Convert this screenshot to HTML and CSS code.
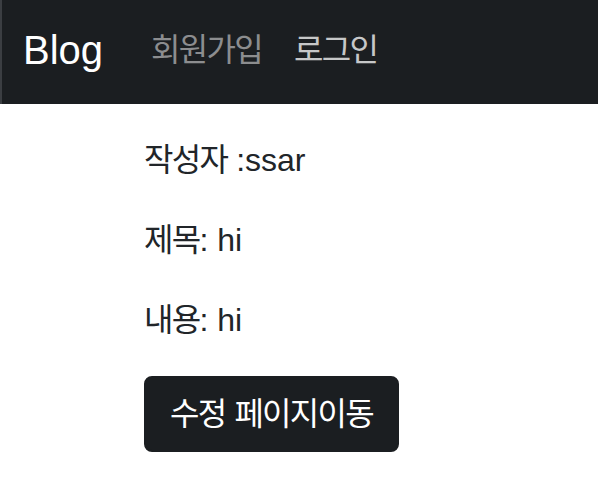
FILE: index.html
```html
<!DOCTYPE html>
<html lang="ko">
<head>
<meta charset="utf-8">
<title>Blog</title>
<link rel="stylesheet" href="styles.css">
</head>
<body>
<nav class="navbar">
  <a class="brand" href="#">Blog</a>
  <ul class="nav">
    <li><a class="nav-link" href="#"><span class="ko">회원가입</span></a></li>
    <li><a class="nav-link active" href="#"><span class="ko">로그인</span></a></li>
  </ul>
</nav>
<main class="content">
  <p><span class="ko">작성자</span> :ssar</p>
  <p><span class="ko">제목</span>: hi</p>
  <p><span class="ko">내용</span>: hi</p>
  <button class="btn" type="button"><span class="ko">수정</span> <span class="ko">페이지이동</span></button>
</main>
</body>
</html>
```
FILE: styles.css
```css
html, body {
  margin: 0;
  padding: 0;
  background: #ffffff;
}
body {
  font-family: "Liberation Sans", "Noto Sans CJK KR", sans-serif;
  font-size: 32px;
  line-height: 1.5;
  color: #212529;
}
.ko {
  letter-spacing: -1.7px;
}
.navbar {
  height: 104px;
  box-sizing: border-box;
  background: #1b1e21;
  border-left: 2px solid #3b3e42;
  display: flex;
  align-items: center;
  padding: 0 20px 0 21px;
}
.brand {
  font-size: 40px;
  line-height: 60px;
  color: #ffffff;
  text-decoration: none;
  margin-right: 32px;
  margin-top: -4px;
}
.nav {
  list-style: none;
  margin: 0;
  padding: 0;
  display: flex;
}
.nav-link {
  display: block;
  padding: 8px 16px;
  line-height: 48px;
  color: #8c8d8f;
  text-decoration: none;
  margin-top: -4px;
}
.nav-link.active {
  color: #c6c7c8;
}
.content {
  padding: 32px 0 0 144px;
}
.content p {
  margin: 0 0 32px;
}
.btn {
  font-family: inherit;
  font-size: 32px;
  line-height: 48px;
  color: #ffffff;
  background: #1b1e21;
  border: 2px solid #1b1e21;
  border-radius: 8px;
  padding: 12px 24px;
  cursor: pointer;
}
```
